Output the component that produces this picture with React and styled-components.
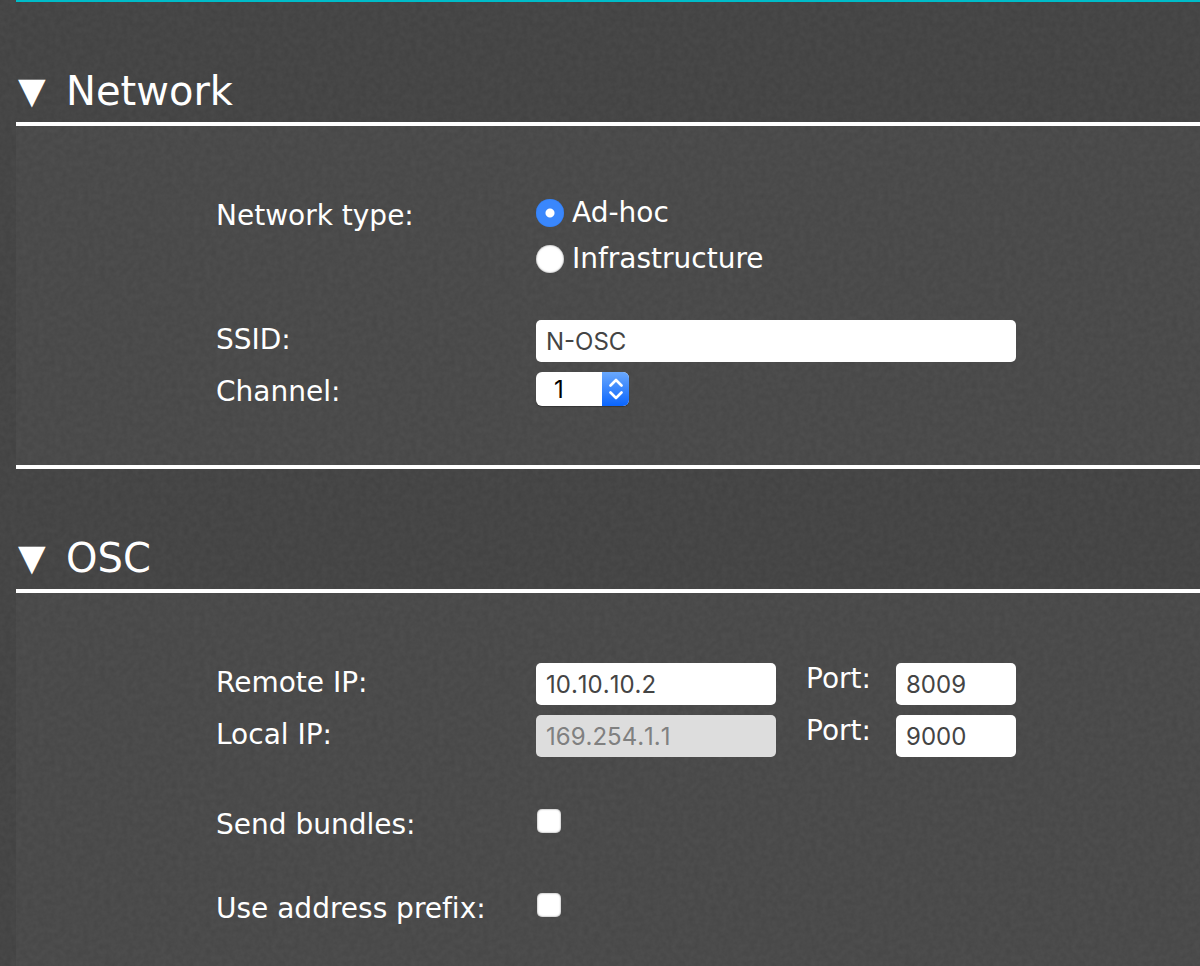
import React, { useState } from "react";
import styled, { createGlobalStyle } from "styled-components";

const grain = `url("data:image/svg+xml,${encodeURIComponent(
  `<svg xmlns='http://www.w3.org/2000/svg' width='400' height='400'><filter id='g' x='0' y='0' width='100%' height='100%'><feTurbulence type='fractalNoise' baseFrequency='0.18' numOctaves='3' seed='4' stitchTiles='stitch'/><feColorMatrix values='0 0 0 0 0  0 0 0 0 0  0 0 0 0 0  0.14 0 0 0 -0.01'/></filter><rect width='400' height='400' filter='url(#g)'/></svg>`
)}")`;

const GlobalStyle = createGlobalStyle`
  *, *::before, *::after { box-sizing: border-box; }
  body {
    margin: 0;
    color: #fff;
    background: #4a4a4a ${grain};
    font: 28px/40px Verdana, "DejaVu Sans", sans-serif;
    font-variant-ligatures: none;
  }
`;

const Page = styled.main`
  display: flex;
  flex-direction: column;
  min-height: 100vh;
  padding-left: 16px;
`;

const Sections = styled.div`
  display: flex;
  flex: 1;
  flex-direction: column;
  border-top: 2px solid #00bcc8;
`;

const Section = styled.section`
  display: flex;
  flex-direction: column;
  flex-grow: ${(p) => (p.$fill ? 1 : 0)};
`;

const Heading = styled.h2`
  margin: 0;
  padding: 65px 0 7px;
  font-size: 40px;
  font-weight: 400;
  line-height: 48px;
  border-bottom: 4px solid #fff;
`;

const Toggle = styled.button`
  display: flex;
  align-items: center;
  padding: 0;
  border: 0;
  color: inherit;
  background: none;
  font: inherit;
  cursor: pointer;
`;

const Marker = styled.span`
  width: 50px;
  padding-left: 2px;
  font-size: 36px;
  line-height: 48px;
  text-align: left;
`;

const Panel = styled.div`
  display: flex;
  flex: 1;
  flex-direction: column;
  gap: ${(p) => p.$gap}px;
  padding: 70px 24px ${(p) => (p.$closed ? 51 : 24)}px 200px;
  background: rgba(255, 255, 255, 0.03);
  border-bottom: ${(p) => (p.$closed ? "4px solid #fff" : "0")};
`;

const Group = styled.div`
  display: flex;
  flex-direction: column;
  gap: ${(p) => p.$gap}px;
`;

const Row = styled.div`
  display: grid;
  grid-template-columns: 320px 1fr;
  align-items: start;
  min-height: 42px;
`;

const Label = styled.label``;

const Controls = styled.div`
  display: flex;
  align-items: flex-start;
`;

const Radios = styled.div`
  display: flex;
  flex-direction: column;
  gap: 12px;
`;

const RadioLabel = styled.label`
  display: flex;
  align-items: center;
  gap: 8px;
  line-height: 34px;
`;

const Radio = styled.input`
  appearance: none;
  width: 28px;
  height: 28px;
  margin: 0;
  border-radius: 50%;
  background: #fff;
  box-shadow: inset 0 0 2px #777;

  &:checked {
    background: radial-gradient(circle, #fff 0 4px, #3a87fc 5px);
    box-shadow: inset 0 0 1px #2273ee;
  }
`;

const Check = styled.input`
  appearance: none;
  width: 24px;
  height: 24px;
  margin: 4px 1px;
  border-radius: 5px;
  background: #fff;
  box-shadow: inset 0 0 2px #777;

  &:checked {
    background: #3a87fc;
  }
`;

const Field = styled.input`
  width: ${(p) => p.$width}px;
  height: 42px;
  padding: 0 10px;
  border: 0;
  border-radius: 5px;
  color: #444;
  background: #fff;
  font: 24px/40px Inter, sans-serif;
  font-kerning: none;

  &:disabled {
    color: #808080;
    background: #ddd;
  }
`;

const PortLabel = styled.label`
  width: 120px;
  padding-left: 30px;
  line-height: 32px;
`;

const Picker = styled.div`
  position: relative;
  display: flex;
`;

const Select = styled.select`
  appearance: none;
  width: 93px;
  height: 34px;
  padding: 2px 32px 0 18px;
  border: 0;
  border-radius: 6px;
  color: #000;
  background: #fff;
  font: 24px/32px Inter, sans-serif;
  box-shadow: 0 1px 1px rgba(0, 0, 0, 0.3);
`;

const Stepper = styled.span`
  position: absolute;
  inset: 0 0 0 auto;
  display: grid;
  place-items: center;
  width: 27px;
  border-radius: 0 6px 6px 0;
  background: linear-gradient(#6aa8fc, #0a65fd);
  pointer-events: none;
`;

function Fold({ title, children, gap, closed }) {
  const [open, setOpen] = useState(true);
  return (
    <Section $fill={!closed}>
      <Heading>
        <Toggle type="button" aria-expanded={open} onClick={() => setOpen(!open)}>
          <Marker aria-hidden="true">{open ? "▼" : "▶"}</Marker>
          <span>{title}</span>
        </Toggle>
      </Heading>
      {open && (
        <Panel $gap={gap} $closed={closed}>
          {children}
        </Panel>
      )}
    </Section>
  );
}

function Address({ id, label, ip, port, disabled }) {
  return (
    <Row>
      <Label htmlFor={id}>{label}</Label>
      <Controls>
        <Field id={id} $width={240} defaultValue={ip} disabled={disabled} />
        <PortLabel htmlFor={`${id}-port`}>Port:</PortLabel>
        <Field id={`${id}-port`} $width={120} defaultValue={port} />
      </Controls>
    </Row>
  );
}

function CheckRow({ id, label }) {
  return (
    <Row>
      <Label htmlFor={id}>{label}</Label>
      <Controls>
        <Check type="checkbox" id={id} />
      </Controls>
    </Row>
  );
}

export default function App() {
  return (
    <Page>
      <GlobalStyle />
      <Sections>
        <Fold title="Network" gap={44} closed>
          <Row role="radiogroup" aria-labelledby="network-type">
            <span id="network-type">Network type:</span>
            <Radios>
              <RadioLabel>
                <Radio type="radio" name="network" defaultChecked />
                Ad-hoc
              </RadioLabel>
              <RadioLabel>
                <Radio type="radio" name="network" />
                Infrastructure
              </RadioLabel>
            </Radios>
          </Row>
          <Group $gap={10}>
            <Row>
              <Label htmlFor="ssid">SSID:</Label>
              <Controls>
                <Field id="ssid" $width={480} defaultValue="N-OSC" />
              </Controls>
            </Row>
            <Row>
              <Label htmlFor="channel">Channel:</Label>
              <Controls>
                <Picker>
                  <Select id="channel" defaultValue="1">
                    {Array.from({ length: 11 }, (_, i) => (
                      <option key={i}>{i + 1}</option>
                    ))}
                  </Select>
                  <Stepper>
                    <svg width="14" height="22" viewBox="0 0 14 22" fill="none" stroke="#fff" strokeWidth="2.6" strokeLinecap="round" strokeLinejoin="round" aria-hidden="true">
                      <path d="M1.5 7.500 7 2l5.500 5.500M1.500 14.500 7 20l5.500-5.500" />
                    </svg>
                  </Stepper>
                </Picker>
              </Controls>
            </Row>
          </Group>
        </Fold>
        <Fold title="OSC" gap={48}>
          <Group $gap={10}>
            <Address id="remote" label="Remote IP:" ip="10.10.10.2" port="8009" />
            <Address id="local" label="Local IP:" ip="169.254.1.1" port="9000" disabled />
          </Group>
          <Group $gap={42}>
            <CheckRow id="bundles" label="Send bundles:" />
            <CheckRow id="prefix" label="Use address prefix:" />
          </Group>
        </Fold>
      </Sections>
    </Page>
  );
}
